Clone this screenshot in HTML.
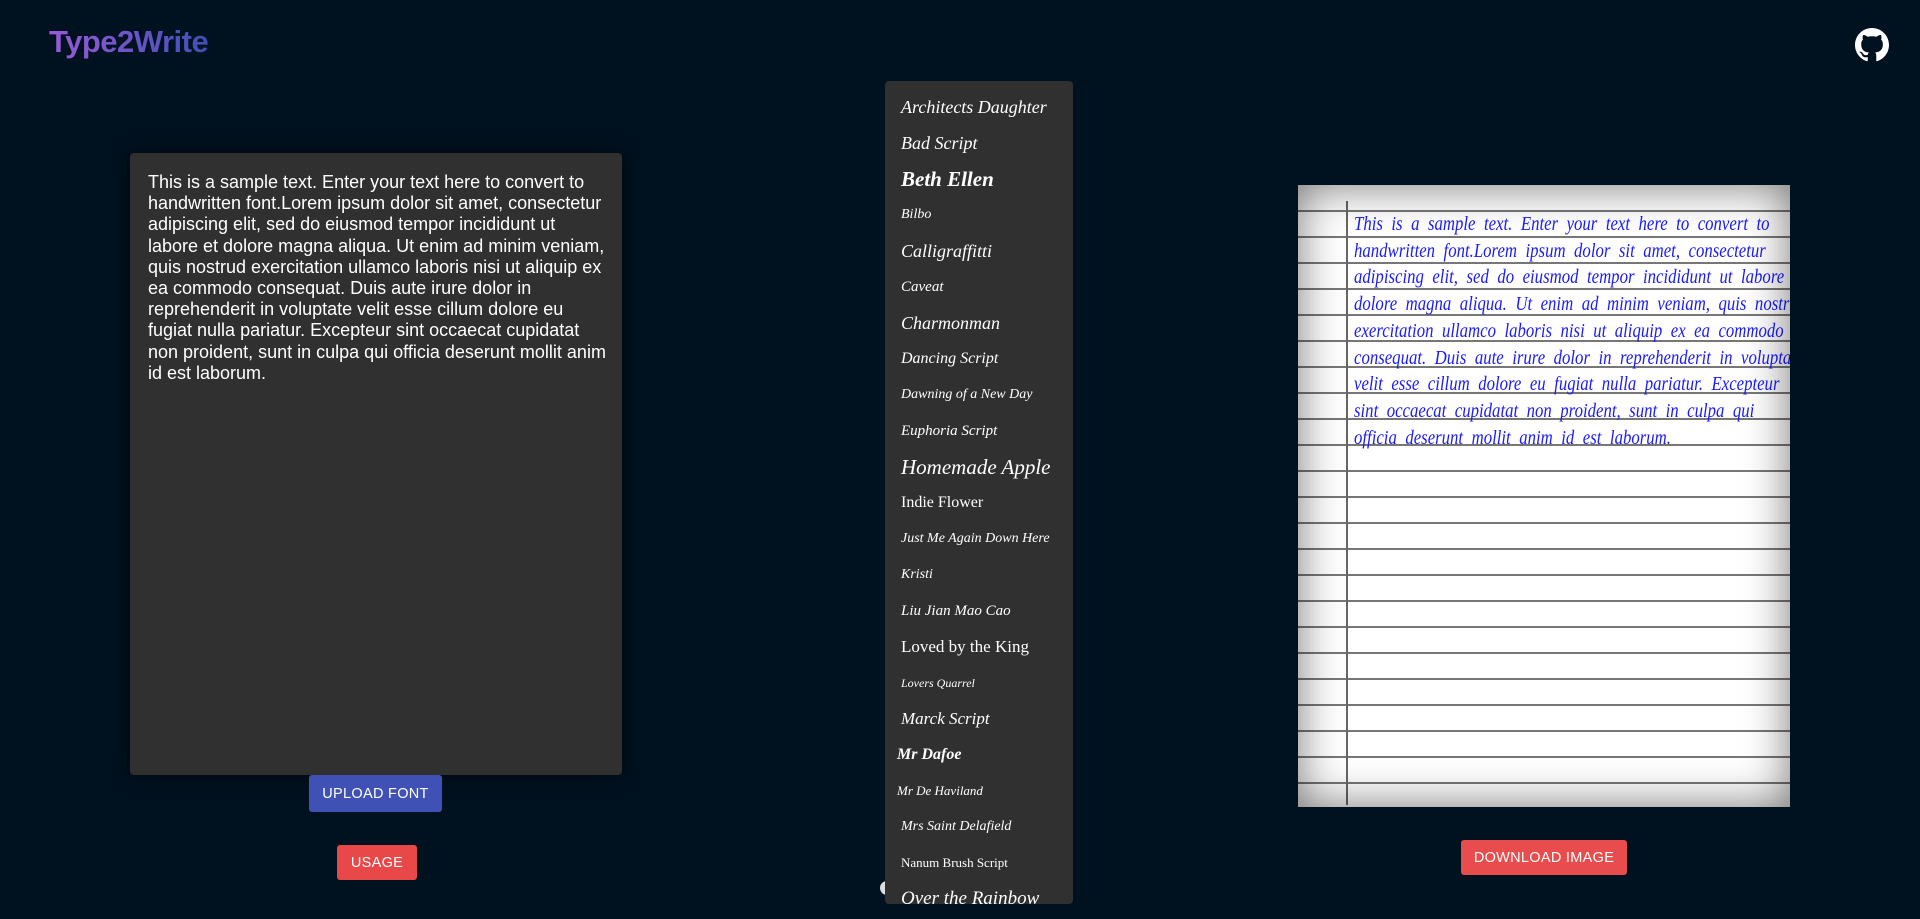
<!DOCTYPE html>
<html><head><meta charset="utf-8"><style>
*{margin:0;padding:0;box-sizing:border-box}
body{width:1920px;height:919px;background:#00111f;overflow:hidden;position:relative;font-family:"Liberation Sans",sans-serif}
.logo{position:absolute;left:49px;top:24px;font-size:31px;font-weight:bold;background:linear-gradient(90deg,#9a5ad8,#3f4fb5);-webkit-background-clip:text;color:transparent;letter-spacing:-0.5px}
.gh{position:absolute;left:1855px;top:28px}
.ta{position:absolute;left:130px;top:153px;width:492px;height:622px;background:#303030;border-radius:4px;box-shadow:0 0 20px rgba(0,0,0,.5);padding:19px 0 0 18px;color:#fff;font-size:18px;line-height:21.2px;white-space:nowrap}
.btn{position:absolute;color:#fff;font-size:14.5px;display:flex;align-items:center;justify-content:center;border-radius:3px;letter-spacing:.3px}
.dd{position:absolute;left:885px;top:81px;width:188px;height:823px;background:#303030;border-radius:4px;overflow:hidden;padding-top:13px}
.dd div{height:36px;line-height:26px;padding-left:16px;color:#fff;font-family:"Liberation Serif",serif;font-style:italic;font-size:18px;white-space:nowrap}
.paper{position:absolute;left:1298px;top:185px;width:492px;height:622px;background:#fff;overflow:hidden;
background-image:repeating-linear-gradient(180deg,transparent 0,transparent 24px,#777 24px,#777 26px);background-position:0 1px}
.paper:after{content:"";position:absolute;inset:0;box-shadow:inset 0 0 45px rgba(0,0,0,.55)}
.vl{position:absolute;left:48px;top:16px;width:2px;height:604px;background:#666}
.hw{position:absolute;left:56px;top:27px;color:#1a1aff;font-family:"Liberation Serif",serif;font-style:italic;font-size:19.5px;line-height:26.7px;white-space:nowrap;word-spacing:5px;transform:scaleX(.86);transform-origin:0 0}
</style></head><body>
<div class="logo">Type2Write</div>
<svg class="gh" width="34" height="34" viewBox="0 0 16 16"><path fill="#fff" d="M8 0C3.58 0 0 3.58 0 8c0 3.54 2.29 6.53 5.47 7.59.4.07.55-.17.55-.38 0-.19-.01-.82-.01-1.49-2.01.37-2.53-.49-2.69-.94-.09-.23-.48-.94-.82-1.13-.28-.15-.68-.52-.01-.53.63-.01 1.08.58 1.23.82.72 1.21 1.87.87 2.33.66.07-.52.28-.87.51-1.07-1.78-.2-3.64-.89-3.64-3.95 0-.87.31-1.59.82-2.15-.08-.2-.36-1.02.08-2.12 0 0 .67-.21 2.2.82.64-.18 1.32-.27 2-.27.68 0 1.36.09 2 .27 1.53-1.04 2.2-.82 2.2-.82.44 1.1.16 1.92.08 2.12.51.56.82 1.27.82 2.15 0 3.07-1.87 3.75-3.65 3.95.29.25.54.73.54 1.48 0 1.07-.01 1.93-.01 2.2 0 .21.15.46.55.38A8.013 8.013 0 0016 8c0-4.42-3.58-8-8-8z"/></svg>
<div class="ta">This is a sample text. Enter your text here to convert to<br>handwritten font.Lorem ipsum dolor sit amet, consectetur<br>adipiscing elit, sed do eiusmod tempor incididunt ut<br>labore et dolore magna aliqua. Ut enim ad minim veniam,<br>quis nostrud exercitation ullamco laboris nisi ut aliquip ex<br>ea commodo consequat. Duis aute irure dolor in<br>reprehenderit in voluptate velit esse cillum dolore eu<br>fugiat nulla pariatur. Excepteur sint occaecat cupidatat<br>non proident, sunt in culpa qui officia deserunt mollit anim<br>id est laborum.</div>
<div class="btn" style="left:309px;top:775px;width:133px;height:37px;background:#3f51b5">UPLOAD FONT</div>
<div class="btn" style="left:337px;top:845px;width:80px;height:35px;background:#e84848">USAGE</div>
<div style="position:absolute;left:880px;top:881px;width:14px;height:14px;border-radius:50%;background:#ddd"></div>
<div class="dd">
<div>Architects Daughter</div><div>Bad Script</div><div style="font-weight:bold;font-size:21px">Beth Ellen</div><div style="font-size:14px">Bilbo</div><div>Calligraffitti</div><div style="font-size:15px">Caveat</div><div>Charmonman</div><div style="font-size:16px">Dancing Script</div><div style="font-size:14px">Dawning of a New Day</div><div style="font-size:15px">Euphoria Script</div><div style="font-size:21px">Homemade Apple</div><div style="font-style:normal;font-size:16px">Indie Flower</div><div style="font-size:14px">Just Me Again Down Here</div><div style="font-size:14px">Kristi</div><div style="font-size:15px">Liu Jian Mao Cao</div><div style="font-style:normal;font-size:17px">Loved by the King</div><div style="font-size:12px">Lovers Quarrel</div><div style="font-size:17px">Marck Script</div><div style="font-weight:bold;font-size:16px;padding-left:12px">Mr Dafoe</div><div style="font-size:13px;padding-left:12px">Mr De Haviland</div><div style="font-size:14px">Mrs Saint Delafield</div><div style="font-style:normal;font-size:13px">Nanum Brush Script</div><div style="font-size:19px">Over the Rainbow</div>
</div>
<div class="paper"><div class="vl"></div><div class="hw">This is a sample text. Enter your text here to convert to<br>handwritten font.Lorem ipsum dolor sit amet, consectetur<br>adipiscing elit, sed do eiusmod tempor incididunt ut labore<br>dolore magna aliqua. Ut enim ad minim veniam, quis nostrud<br>exercitation ullamco laboris nisi ut aliquip ex ea commodo<br>consequat. Duis aute irure dolor in reprehenderit in voluptate<br>velit esse cillum dolore eu fugiat nulla pariatur. Excepteur<br>sint occaecat cupidatat non proident, sunt in culpa qui<br>officia deserunt mollit anim id est laborum.</div></div>
<div class="btn" style="left:1461px;top:840px;width:166px;height:35px;background:#e84c4c">DOWNLOAD IMAGE</div>
</body></html>
